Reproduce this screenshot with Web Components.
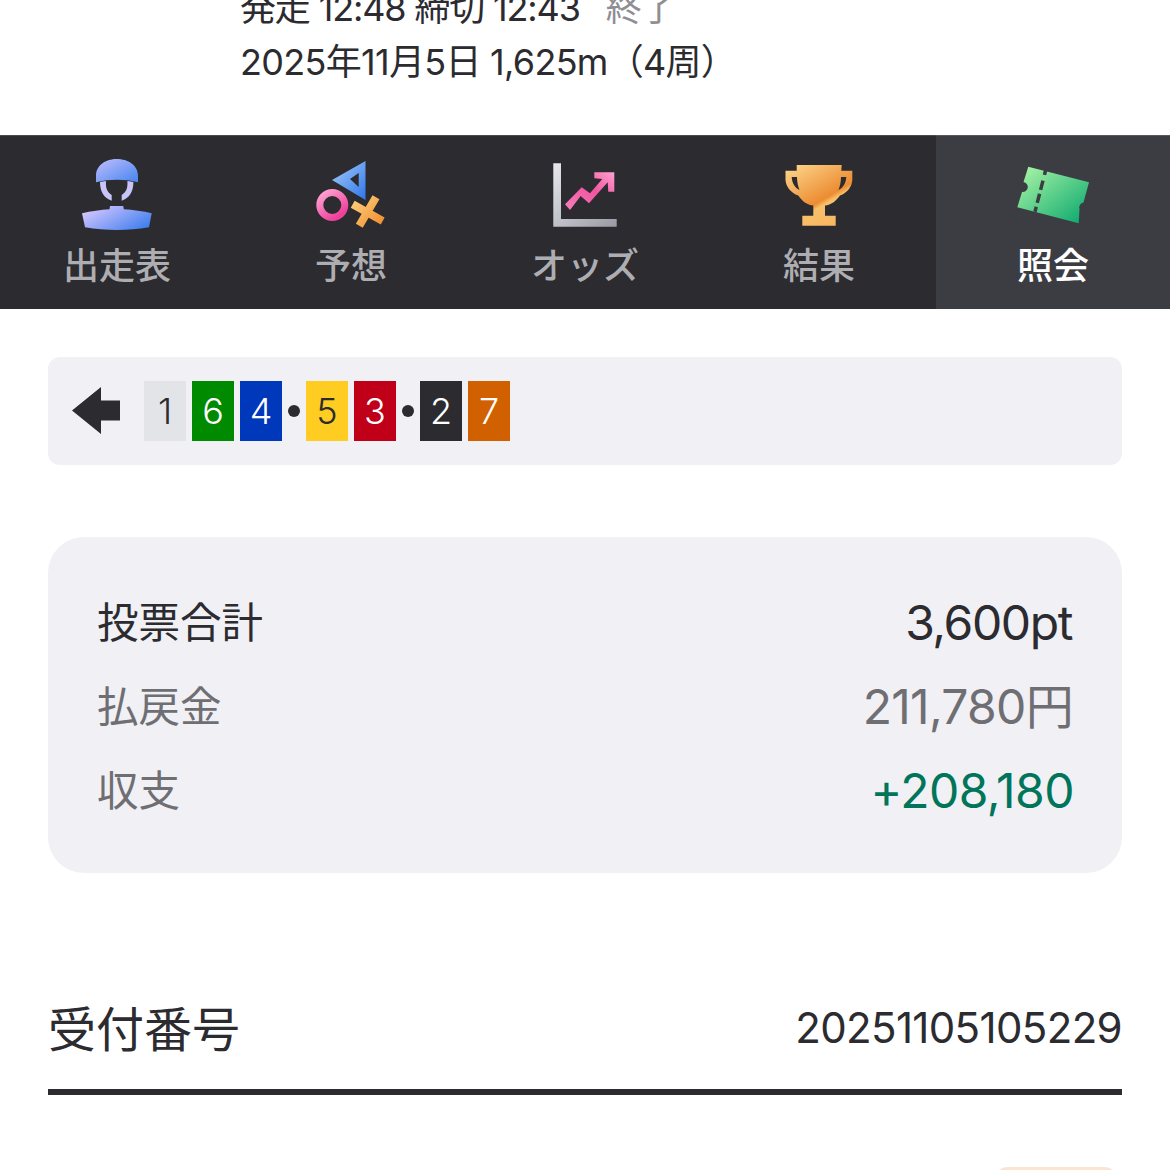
<!DOCTYPE html>
<html lang="ja">
<head>
<meta charset="utf-8">
<title>照会</title>
<style>
  html, body { margin: 0; padding: 0; background: #fff; }
  body {
    height: 1170px;
    overflow: hidden;
    font-family: Inter, "Noto Sans CJK JP", sans-serif;
    color: #2b2b30;
  }
  race-tabs svg { display: block; width: 84px; height: 84px; }
</style>
</head>
<body>
<race-info>
  <span style="letter-spacing:-1.15px">発走 12:48 締切 12:43<span style="color:#8e8e93;margin-left:26px">終了</span></span>
  <span>2025年11月5日 1,625m（4周）</span>
</race-info>

<race-tabs>
  <tab-item label="出走表">
    <svg viewBox="0 0 84 84">
      <defs>
        <linearGradient id="g-dome" x1="0" y1="0" x2="1" y2="1">
          <stop offset="0" stop-color="#c0beff"/><stop offset="1" stop-color="#4585ee"/>
        </linearGradient>
        <linearGradient id="g-body" x1="0" y1="0.2" x2="1" y2="0.8">
          <stop offset="0" stop-color="#d8c8ff"/><stop offset="1" stop-color="#3d7eee"/>
        </linearGradient>
      </defs>
      <path fill="url(#g-dome)" d="M21 26.300V20C21 9 31 3 41.700 3C53 3 63 9 63 20V26.300C50 23 34 23 21 26.300Z"/>
      <path fill="#c9c4f7" d="M25 26L31 25C30.500 32 32 36 36.700 39V44.700C29 42 25 36 25 26ZM58.400 26L52.400 25C52.900 32 51.400 36 46.700 39V44.700C54.400 42 58.400 36 58.400 26Z"/>
      <path fill="url(#g-body)" d="M35 50L48.300 50L48.800 53.300C58 54 68 55 76.700 57.300L74 71.300C53 75 31 75 10 71.300L7 57.300C16 55 26 54 34.500 53.300Z"/>
    </svg>
  </tab-item>
  <tab-item label="予想">
    <svg viewBox="0 0 84 84">
      <defs>
        <linearGradient id="g-tri" x1="0" y1="0" x2="1" y2="1">
          <stop offset="0" stop-color="#a8cdfa"/><stop offset="1" stop-color="#2f76ea"/>
        </linearGradient>
        <linearGradient id="g-pink" x1="0" y1="0" x2="0.7" y2="1">
          <stop offset="0" stop-color="#ffa6d2"/><stop offset="1" stop-color="#ee3f9a"/>
        </linearGradient>
        <linearGradient id="g-x" gradientUnits="userSpaceOnUse" x1="44" y1="42" x2="74" y2="70">
          <stop offset="0" stop-color="#fdd27e"/><stop offset="1" stop-color="#f08a2c"/>
        </linearGradient>
      </defs>
      <path fill="url(#g-tri)" fill-rule="evenodd" d="M23 24L56.500 5V44ZM41 23L49.700 31V17Z"/>
      <circle cx="23.300" cy="49" r="12.500" fill="none" stroke="url(#g-pink)" stroke-width="7"/>
      <path fill="none" stroke="url(#g-x)" stroke-width="8" d="M67 41.300L50.300 69.700M43.700 48.300L73.700 65"/>
    </svg>
  </tab-item>
  <tab-item label="オッズ">
    <svg viewBox="0 0 84 84">
      <defs>
        <linearGradient id="g-gray" x1="0" y1="0" x2="1" y2="1">
          <stop offset="0" stop-color="#e8e8ee"/><stop offset="1" stop-color="#9a9aa4"/>
        </linearGradient>
        <linearGradient id="g-arrow" x1="0" y1="1" x2="1" y2="0">
          <stop offset="0" stop-color="#f57fbb"/><stop offset="0.55" stop-color="#f0559f"/><stop offset="1" stop-color="#ffa0d0"/>
        </linearGradient>
      </defs>
      <path fill="url(#g-gray)" d="M10.300 7.300H18V63H73.700V70.700H10.300Z"/>
      <path fill="url(#g-arrow)" d="M51.300 16.300H71.300V35.700H65.300L64.700 26.300L46 47.300L37.700 40L27 54L22 48.300L38.700 31.300L47 37.300L59.300 23L51.300 22.300Z"/>
    </svg>
  </tab-item>
  <tab-item label="結果">
    <svg viewBox="0 0 84 84">
      <defs>
        <linearGradient id="g-gold" gradientUnits="userSpaceOnUse" x1="14" y1="9" x2="50" y2="70">
          <stop offset="0" stop-color="#fdd58a"/><stop offset="0.65" stop-color="#ec8c32"/><stop offset="0.72" stop-color="#f8c06a"/><stop offset="1" stop-color="#f8b862"/>
        </linearGradient>
      </defs>
      <path fill="url(#g-gold)" fill-rule="evenodd" d="M19.700 9H64.700L64.300 14.700H75.300V24C75 31 70 37 63 39.500C59 45 54 49 48 49.500V59.700H58.700V69.700H25.300V59.700H36.300V49.500C30 49 25 45 21.300 39.500C14 37 9 31 8.500 24V14.700H19.700ZM14.700 21H20C20 26 21 30 22.500 34C18 32 15 27 14.700 21ZM69.300 21H64C64 26 63 30 61.500 34C66 32 69 27 69.300 21Z"/>
    </svg>
  </tab-item>
  <tab-item label="照会" active>
    <svg viewBox="0 0 84 84">
      <defs>
        <linearGradient id="g-green" x1="0" y1="0" x2="1" y2="1">
          <stop offset="0" stop-color="#b0f8a8"/><stop offset="1" stop-color="#04a56c"/>
        </linearGradient>
      </defs>
      <path fill="url(#g-green)" d="M17.300 10.700L78 26.300L72.500 46.500A5 5 0 0 0 68.500 53L67.700 67.300L6.300 51.300L11 36A5 5 0 0 0 12.500 26Z"/>
      <path fill="none" stroke="#3c3d42" stroke-width="3.500" stroke-dasharray="5 6 9.500 4 9.500 4 8" d="M34.700 14L24 55.700"/>
    </svg>
  </tab-item>
</race-tabs>

<combo-bar>
  <horse-chip bg="#e3e4e8" fg="#2b2b30">1</horse-chip>
  <horse-chip bg="#008a00">6</horse-chip>
  <horse-chip bg="#0038bb">4</horse-chip>
  <i style="width:12px;height:12px;border-radius:50%;background:#2b2b30"></i>
  <horse-chip bg="#ffcc22" fg="#2b2b30">5</horse-chip>
  <horse-chip bg="#c00018">3</horse-chip>
  <i style="width:12px;height:12px;border-radius:50%;background:#2b2b30"></i>
  <horse-chip bg="#2b2b30">2</horse-chip>
  <horse-chip bg="#d06000">7</horse-chip>
</combo-bar>

<summary-card>
  <summary-row label="投票合計" value="3,600pt" tone="dark"></summary-row>
  <summary-row label="払戻金" value="211,780円" tone="gray"></summary-row>
  <summary-row label="収支" value="+208,180" tone="green"></summary-row>
</summary-card>

<receipt-row label="受付番号" value="20251105105229"></receipt-row>
<peach-pill></peach-pill>

<script>
const raceInfoTemplate = document.createElement('template');
raceInfoTemplate.innerHTML = `
  <style>
    :host {
      display: flex;
      flex-direction: column;
      justify-content: flex-end;
      height: 135px;
      padding: 0 0 46px 240px;
      box-sizing: border-box;
      overflow: hidden;
      font-size: 36px;
      line-height: 54px;
      letter-spacing: -0.7px;
      white-space: nowrap;
    }
    ::slotted(span) { display: block; flex: none; }
  </style>
  <slot></slot>
`;

class RaceInfo extends HTMLElement {
  constructor() {
    super();
    this.attachShadow({ mode: 'open' }).appendChild(raceInfoTemplate.content.cloneNode(true));
  }
}

const raceTabsTemplate = document.createElement('template');
raceTabsTemplate.innerHTML = `
  <style>
    :host {
      display: grid;
      grid-template-columns: repeat(5, 234px);
      height: 174px;
      background: #2b2b30;
    }
  </style>
  <slot></slot>
`;

class RaceTabs extends HTMLElement {
  constructor() {
    super();
    this.attachShadow({ mode: 'open' }).appendChild(raceTabsTemplate.content.cloneNode(true));
  }
}

const tabItemTemplate = document.createElement('template');
tabItemTemplate.innerHTML = `
  <style>
    :host {
      display: flex;
      flex-direction: column;
      align-items: center;
      padding-top: 21px;
      box-sizing: border-box;
      box-shadow: inset 0 1px 0 rgba(255, 255, 255, 0.14);
      color: #aeaeb2;
      font-size: 36px;
      font-weight: 500;
      line-height: 46px;
    }
    :host([active]) { background: #3c3d42; color: #fff; }
    .label { margin-top: 3px; }
  </style>
  <slot></slot>
  <div class="label"></div>
`;

class TabItem extends HTMLElement {
  constructor() {
    super();
    this.attachShadow({ mode: 'open' }).appendChild(tabItemTemplate.content.cloneNode(true));
  }

  connectedCallback() {
    this.shadowRoot.querySelector('.label').textContent = this.getAttribute('label');
  }
}

const comboBarTemplate = document.createElement('template');
comboBarTemplate.innerHTML = `
  <style>
    :host {
      display: flex;
      align-items: center;
      gap: 6px;
      margin: 48px 48px 0;
      padding: 24px;
      background: #f0f0f5;
      border-radius: 12px;
    }
    svg { width: 48px; height: 48px; flex: none; margin-right: 18px; }
  </style>
  <svg viewBox="0 0 48 48"><path fill="#2b2b30" d="M0 23.500L29 0V13.500H48V33.500H29V47Z"/></svg>
  <slot></slot>
`;

class ComboBar extends HTMLElement {
  constructor() {
    super();
    this.attachShadow({ mode: 'open' }).appendChild(comboBarTemplate.content.cloneNode(true));
  }
}

const horseChipTemplate = document.createElement('template');
horseChipTemplate.innerHTML = `
  <style>
    :host {
      display: flex;
      align-items: center;
      justify-content: center;
      width: 42px;
      height: 60px;
      padding-bottom: 1px;
      box-sizing: border-box;
      font-size: 36px;
      font-weight: 300;
      background: var(--chip-bg);
      color: var(--chip-fg, #fff);
    }
  </style>
  <slot></slot>
`;

class HorseChip extends HTMLElement {
  constructor() {
    super();
    this.attachShadow({ mode: 'open' }).appendChild(horseChipTemplate.content.cloneNode(true));
  }

  connectedCallback() {
    this.style.setProperty('--chip-bg', this.getAttribute('bg'));
    if (this.hasAttribute('fg')) this.style.setProperty('--chip-fg', this.getAttribute('fg'));
  }
}

const summaryCardTemplate = document.createElement('template');
summaryCardTemplate.innerHTML = `
  <style>
    :host {
      display: block;
      margin: 72px 48px 0;
      padding: 44px 48px 40px 49px;
      background: #f0f0f5;
      border-radius: 36px;
    }
  </style>
  <slot></slot>
`;

class SummaryCard extends HTMLElement {
  constructor() {
    super();
    this.attachShadow({ mode: 'open' }).appendChild(summaryCardTemplate.content.cloneNode(true));
  }
}

const summaryRowTemplate = document.createElement('template');
summaryRowTemplate.innerHTML = `
  <style>
    :host {
      display: flex;
      justify-content: space-between;
      height: 84px;
      line-height: 84px;
      white-space: nowrap;
    }
    .label { font-size: 41.5px; color: #6e6e73; }
    .value { font-size: 48px; color: #6e6e73; letter-spacing: -0.7px; margin-right: 1px; }
    :host([tone="dark"]) .label, :host([tone="dark"]) .value { color: #2b2b30; }
    :host([tone="dark"]) .value { letter-spacing: -1.4px; margin-right: 2px; }
    :host([tone="green"]) .value { color: #00755a; letter-spacing: -0.5px; margin-right: 0; }
  </style>
  <span class="label"></span>
  <span class="value"></span>
`;

class SummaryRow extends HTMLElement {
  constructor() {
    super();
    this.attachShadow({ mode: 'open' }).appendChild(summaryRowTemplate.content.cloneNode(true));
  }

  connectedCallback() {
    this.shadowRoot.querySelector('.label').textContent = this.getAttribute('label');
    this.shadowRoot.querySelector('.value').textContent = this.getAttribute('value');
  }
}

const receiptRowTemplate = document.createElement('template');
receiptRowTemplate.innerHTML = `
  <style>
    :host {
      display: flex;
      justify-content: space-between;
      align-items: center;
      height: 96px;
      margin: 105px 48px 0;
      padding: 0 0 15px;
      border-bottom: 6px solid #2b2b30;
      white-space: nowrap;
    }
    .label { font-size: 48px; }
    .value { font-size: 42px; letter-spacing: -0.65px; margin-top: 2px; }
  </style>
  <span class="label"></span>
  <span class="value"></span>
`;

class ReceiptRow extends HTMLElement {
  constructor() {
    super();
    this.attachShadow({ mode: 'open' }).appendChild(receiptRowTemplate.content.cloneNode(true));
  }

  connectedCallback() {
    this.shadowRoot.querySelector('.label').textContent = this.getAttribute('label');
    this.shadowRoot.querySelector('.value').textContent = this.getAttribute('value');
  }
}

const peachPillTemplate = document.createElement('template');
peachPillTemplate.innerHTML = `
  <style>
    :host {
      display: block;
      width: 122px;
      height: 60px;
      margin: 72px 53px 0 auto;
      background: #fde4d2;
      border-radius: 12px;
    }
  </style>
`;

class PeachPill extends HTMLElement {
  constructor() {
    super();
    this.attachShadow({ mode: 'open' }).appendChild(peachPillTemplate.content.cloneNode(true));
  }
}

customElements.define('race-info', RaceInfo);
customElements.define('race-tabs', RaceTabs);
customElements.define('tab-item', TabItem);
customElements.define('combo-bar', ComboBar);
customElements.define('horse-chip', HorseChip);
customElements.define('summary-card', SummaryCard);
customElements.define('summary-row', SummaryRow);
customElements.define('receipt-row', ReceiptRow);
customElements.define('peach-pill', PeachPill);
</script>
</body>
</html>
